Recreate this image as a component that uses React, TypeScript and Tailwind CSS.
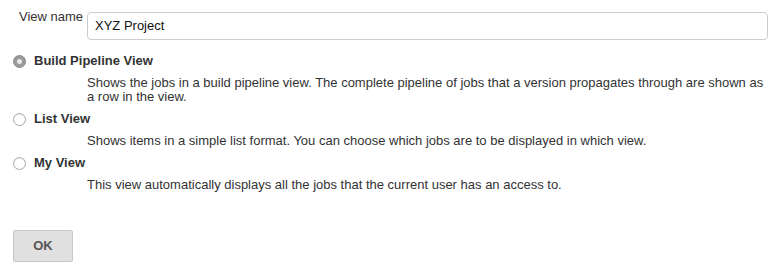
import React from 'react';

type ViewOption = {
  title: string;
  desc: React.ReactNode;
  checked?: boolean;
};

const options: ViewOption[] = [
  {
    title: 'Build Pipeline View',
    desc: (
      <>
        Shows the jobs in a build pipeline view. The complete pipeline of jobs that a version propagates through are shown as
        <br />
        a row in the view.
      </>
    ),
    checked: true,
  },
  {
    title: 'List View',
    desc: 'Shows items in a simple list format. You can choose which jobs are to be displayed in which view.',
  },
  {
    title: 'My View',
    desc: 'This view automatically displays all the jobs that the current user has an access to.',
  },
];

const Radio = ({ checked }: { checked?: boolean }) =>
  checked ? (
    <span className="w-[13px] h-[13px] rounded-full bg-[#9a9a9a] border border-[#8a8a8a] flex items-center justify-center">
      <span className="w-[5px] h-[5px] rounded-full bg-[#e8e8e8]"></span>
    </span>
  ) : (
    <span className="w-[13px] h-[13px] rounded-full bg-white border border-[#a8a8a8] shadow-[inset_0_1px_1px_rgba(0,0,0,0.08)]"></span>
  );

const App = () => {
  return (
    <div className="w-[778px] h-[276px] bg-white text-[#333] text-[13px] font-['Liberation_Sans',Arial,sans-serif] pt-[9px]">
      <div className="flex items-start">
        <label className="w-[87px] pl-[19px] leading-4">View name</label>
        <div className="mt-[3px] w-[681px] h-[28px] border border-[#ccc] rounded-[4px] flex items-center pl-[7px] text-[#111]">
          XYZ Project
        </div>
      </div>

      <div className="mt-[13px] flex flex-col gap-[7px]">
        {options.map((o) => (
          <div key={o.title}>
            <div className="flex items-center h-4 pl-[13px] gap-[8px]">
              <Radio checked={o.checked} />
              <span className="font-bold leading-4">{o.title}</span>
            </div>
            <div className="mt-[7px] pl-[87px] leading-[14px]">{o.desc}</div>
          </div>
        ))}
      </div>

      <div className="pl-[13px] mt-[38px]">
        <button className="w-[60px] h-[32px] bg-[#e0e0e0] border border-[#c8c8c8] rounded-[2px] font-bold text-[#555] text-[13px]">
          OK
        </button>
      </div>
    </div>
  );
};

export default App;
